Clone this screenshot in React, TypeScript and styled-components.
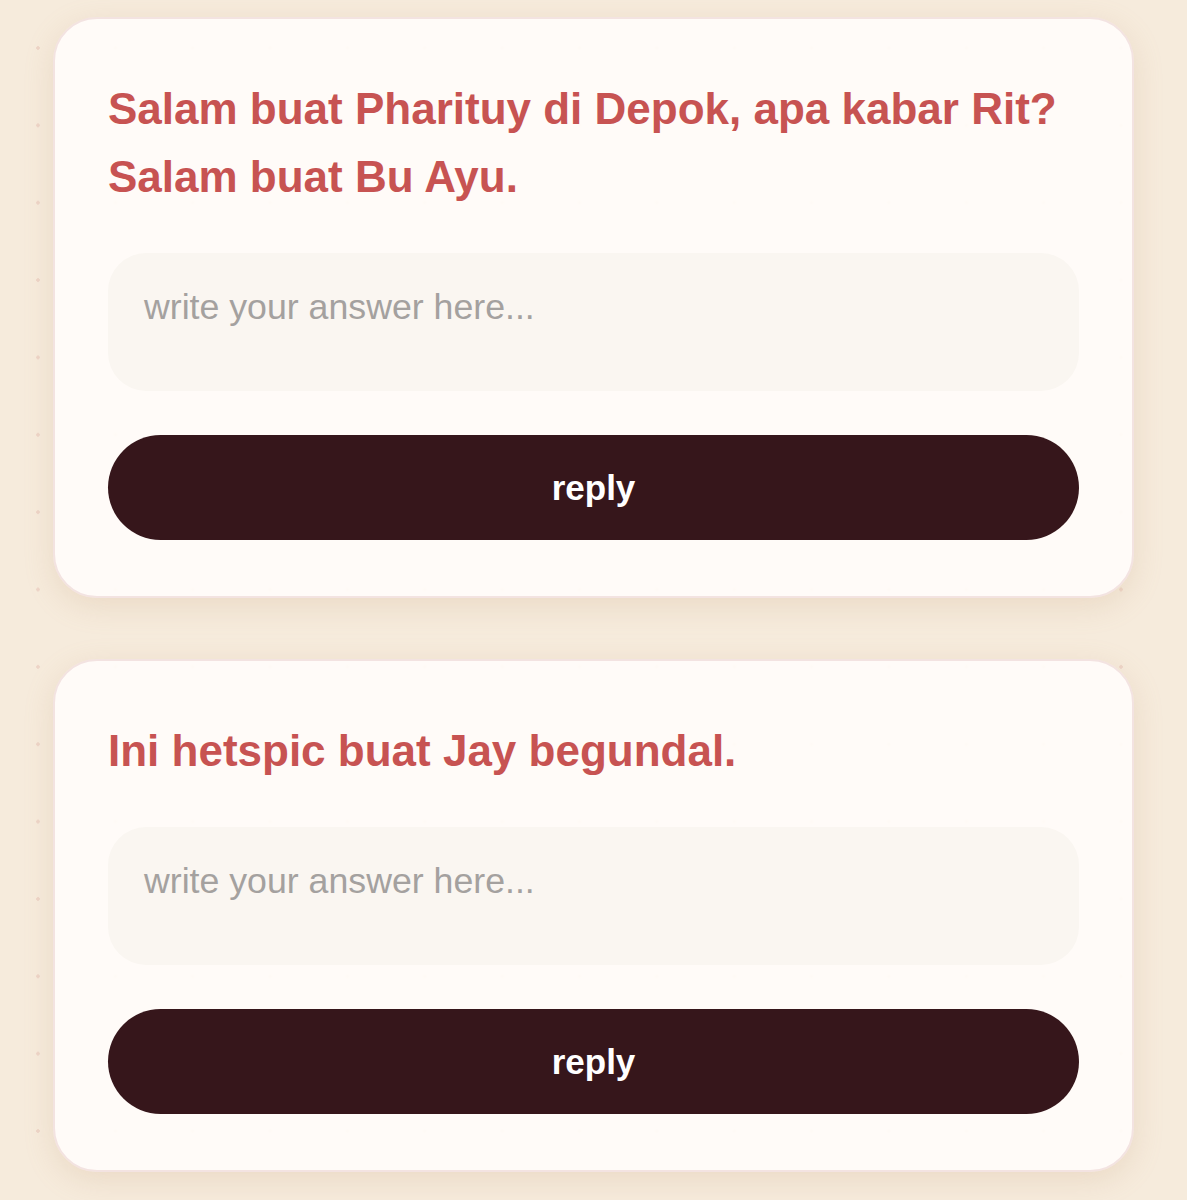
import React from "react";
import styled, { createGlobalStyle } from "styled-components";

const GlobalStyle = createGlobalStyle`
  html, body {
    margin: 0;
    padding: 0;
  }
  body {
    font-family: "Liberation Sans", Arial, Helvetica, sans-serif;
    background-color: #f6ebdc;
    background-image: radial-gradient(circle, rgba(221, 170, 160, 0.35) 0 1.5px, transparent 2.1px);
    background-size: 77.36px 77.36px;
    background-position: -0.7px 9.3px;
    min-height: 1200px;
  }
`;

const Page = styled.main`
  display: flex;
  flex-direction: column;
  gap: 61px;
  padding: 17px 53px 40px;
`;

const Card = styled.section`
  background: rgba(255, 252, 249, 0.95);
  border: 2px solid #f3e3e1;
  border-radius: 44px;
  padding: 56px 53px 56px;
  box-shadow: 0 8px 30px rgba(190, 150, 110, 0.2);
  display: flex;
  flex-direction: column;
`;

const Question = styled.h2`
  margin: 0 0 42px;
  font-size: 44px;
  line-height: 68px;
  font-weight: 700;
  color: #c75352;
`;

const Answer = styled.textarea`
  box-sizing: border-box;
  width: 100%;
  height: 138px;
  border: none;
  outline: none;
  resize: none;
  border-radius: 38px;
  background: #faf6f1;
  padding: 34px 36px;
  font-family: "Liberation Sans", Arial, Helvetica, sans-serif;
  font-size: 35.7px;
  line-height: 1.15;
  color: #333;
  &::placeholder {
    color: #a4a19f;
  }
`;

const ReplyButton = styled.button`
  margin-top: 44px;
  height: 105px;
  width: 100%;
  border: none;
  border-radius: 999px;
  background: #36161b;
  color: #ffffff;
  font-family: "Liberation Sans", Arial, Helvetica, sans-serif;
  font-size: 35px;
  font-weight: 700;
  cursor: pointer;
`;

const questions = [
  "Salam buat Pharituy di Depok, apa kabar Rit? Salam buat Bu Ayu.",
  "Ini hetspic buat Jay begundal.",
];

export default function App() {
  return (
    <>
      <GlobalStyle />
      <Page>
        {questions.map((q) => (
          <Card key={q}>
            <Question>{q}</Question>
            <Answer placeholder="write your answer here..." />
            <ReplyButton>reply</ReplyButton>
          </Card>
        ))}
      </Page>
    </>
  );
}
